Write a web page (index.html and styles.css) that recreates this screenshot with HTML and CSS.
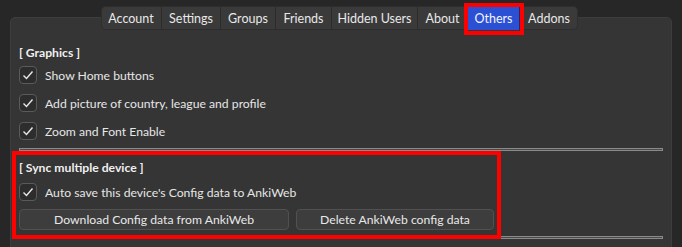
FILE: index.html
```html
<!DOCTYPE html>
<html>
<head>
<meta charset="utf-8">
<link rel="stylesheet" href="styles.css">
</head>
<body>
<div class="tabbar">
  <div class="tab">Account</div>
  <div class="tab">Settings</div>
  <div class="tab">Groups</div>
  <div class="tab">Friends</div>
  <div class="tab">Hidden Users</div>
  <div class="tab">About</div>
  <div class="tab active">Others<span class="mark mark-tab"></span></div>
  <div class="tab last">Addons</div>
</div>
<div class="panel">
  <div class="section graphics">
    <div class="heading">[ Graphics ]</div>
    <div class="check"><span class="box"><svg viewBox="0 0 18 18" width="18" height="18"><polyline points="4.5,9.5 7.5,12.5 13.5,5.5" fill="none" stroke="#e8e8e8" stroke-width="1.4"/></svg></span>Show Home buttons</div>
    <div class="check"><span class="box"><svg viewBox="0 0 18 18" width="18" height="18"><polyline points="4.5,9.5 7.5,12.5 13.5,5.5" fill="none" stroke="#e8e8e8" stroke-width="1.4"/></svg></span>Add picture of country, league and profile</div>
    <div class="check"><span class="box"><svg viewBox="0 0 18 18" width="18" height="18"><polyline points="4.5,9.5 7.5,12.5 13.5,5.5" fill="none" stroke="#e8e8e8" stroke-width="1.4"/></svg></span>Zoom and Font Enable</div>
  </div>
  <div class="sep"></div>
  <div class="section sync">
    <span class="mark mark-sync"></span>
    <div class="heading">[ Sync multiple device ]</div>
    <div class="check"><span class="box"><svg viewBox="0 0 18 18" width="18" height="18"><polyline points="4.5,9.5 7.5,12.5 13.5,5.5" fill="none" stroke="#e8e8e8" stroke-width="1.4"/></svg></span>Auto save this device's Config data to AnkiWeb</div>
    <div class="buttons">
      <div class="btn btn-download">Download Config data from AnkiWeb</div>
      <div class="btn btn-delete">Delete AnkiWeb config data</div>
    </div>
  </div>
  <div class="sep"></div>
</div>
</body>
</html>
```
FILE: styles.css
```css
html, body {
  margin: 0;
  padding: 0;
  background: #272727;
  width: 682px;
  height: 247px;
  overflow: hidden;
  font-family: Lato, "Noto Sans", sans-serif;
  font-size: 12.2px;
  color: #e6e6e6;
}
.tabbar {
  position: relative;
  z-index: 2;
  display: flex;
  margin: 6px 0 0 101px;
  height: 24px;
  width: 477px;
  background: #3a3a3a;
  border-radius: 5px;
  box-shadow: inset 0 0 0 1px #2e2e2e;
}
.tab {
  position: relative;
  display: flex;
  align-items: center;
  justify-content: center;
  height: 24px;
  border-right: 1px solid #2c2c2c;
  box-sizing: border-box;
  color: #e8e8e8;
  font-size: 12.5px;
}
.tab:nth-child(1) { width: 61px; }
.tab:nth-child(2) { width: 59px; }
.tab:nth-child(3) { width: 55px; }
.tab:nth-child(4) { width: 56px; }
.tab:nth-child(5) { width: 86px; }
.tab:nth-child(6) { width: 50px; }
.tab:nth-child(7) { width: 52px; }
.tab:nth-child(8) { width: 58px; border-right: none; }
.tab.active {
  background: #2c50d4;
  color: #f4f4ff;
  border-right: 1px solid #1e2a66;
}
.panel {
  margin: -13px 10px 0 10px;
  height: 240px;
  background: #353535;
  border: 1px solid #3d3d3d;
  border-radius: 5px;
  box-sizing: border-box;
  padding: 27px 8px 0 8px;
}
.section {
  position: relative;
  display: flex;
  flex-direction: column;
}
.heading {
  font-weight: bold;
  height: 16px;
  line-height: 16px;
  color: #f0f0f0;
}
.check {
  display: flex;
  align-items: center;
  gap: 8px;
  height: 28px;
}
.box {
  width: 18px;
  height: 18px;
  box-sizing: border-box;
  border: 1px solid #5a5a5a;
  border-radius: 4px;
  background: #2d2d2d;
  display: flex;
  align-items: center;
  justify-content: center;
}
.box svg { display: block; flex: none; }
.sep {
  height: 3px;
  box-sizing: border-box;
  border: 1px solid #8a8a8a;
  background: #4a4a4a;
  width: 644px;
}
.graphics { padding-bottom: 3px; }
.sync { padding-top: 9px; }
.sync .heading { margin-bottom: 2px; }
.buttons {
  display: flex;
  gap: 7px;
  margin-top: 3px;
  margin-bottom: 6px;
}
.btn {
  height: 21px;
  box-sizing: border-box;
  background: #3d3d3d;
  border: 1px solid #515151;
  border-radius: 4px;
  display: flex;
  align-items: center;
  justify-content: center;
  color: #e8e8e8;
}
.btn-download { width: 270px; }
.btn-delete { width: 198px; }
.mark {
  position: absolute;
  border: 4px solid #ff0000;
  pointer-events: none;
}
.mark-tab {
  left: -4px;
  top: -3px;
  width: 52px;
  height: 24px;
}
.mark-sync {
  left: -7px;
  top: 0;
  width: 481px;
  height: 80px;
}
```
